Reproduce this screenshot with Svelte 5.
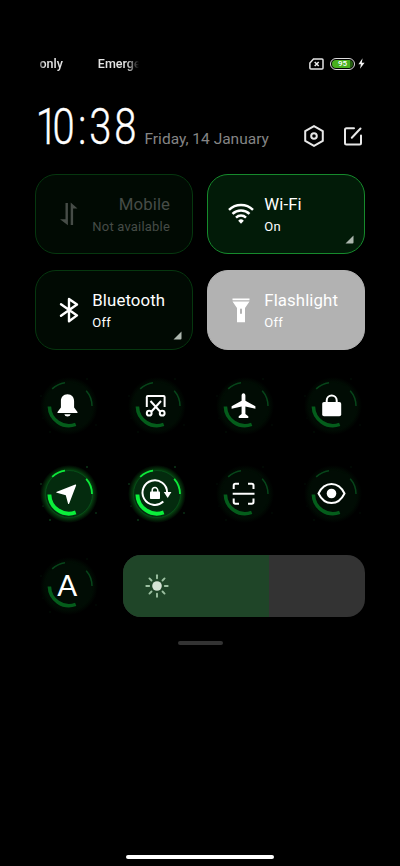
<script lang="ts">
  interface Tile {
    id: string
    title: string
    status: string
    more?: boolean
  }

  const tiles: Tile[] = [
    { id: 'mobile', title: 'Mobile', status: 'Not available' },
    { id: 'wifi', title: 'Wi-Fi', status: 'On', more: true },
    { id: 'bluetooth', title: 'Bluetooth', status: 'Off', more: true },
    { id: 'flashlight', title: 'Flashlight', status: 'Off' },
  ]

  const toggles = [
    { id: 'mute', label: 'Mute', on: false },
    { id: 'screenshot', label: 'Screenshot', on: false },
    { id: 'airplane', label: 'Airplane mode', on: false },
    { id: 'lock', label: 'Lock screen', on: false },
    { id: 'location', label: 'Location', on: true },
    { id: 'rotation', label: 'Rotation lock', on: true },
    { id: 'scanner', label: 'Scanner', on: false },
    { id: 'reading', label: 'Reading mode', on: false },
  ]

  const rays = [0, 45, 90, 135, 180, 225, 270, 315]

  let brightness = $state(60.2)
</script>

{#snippet orb(on: boolean)}
  <circle class="halo" cx="30" cy="30" r="29" fill={on ? 'url(#halo-on)' : 'url(#halo-off)'} />
  <circle class="disc" cx="30" cy="30" r="23.5" />
  <path class="arc thick" d="M10.4 30.5A19.6 19.6 0 0 0 36.7 48.4" />
  <path class="arc" d="M13.2 12.9A24 24 0 0 1 26 6.7" />
  <path class="arc" d="M47.2 14.8A23 23 0 0 1 53 30" />
  <g class="sparks">
    <circle cx="48" cy="3" r=".8" />
    <circle cx="2" cy="20" r=".7" />
    <circle cx="57" cy="49" r=".7" />
    <circle cx="11" cy="56" r=".8" />
    <circle cx="4" cy="42" r=".5" />
  </g>
{/snippet}

<svg class="defs" width="0" height="0" aria-hidden="true">
  <defs>
    <radialGradient id="halo-on">
      <stop offset="0.65" stop-color="#07541b" />
      <stop offset="0.82" stop-color="#06400f" />
      <stop offset="1" stop-color="#000" />
    </radialGradient>
    <radialGradient id="halo-off">
      <stop offset="0.5" stop-color="#011205" />
      <stop offset="0.8" stop-color="#010e04" />
      <stop offset="1" stop-color="#000" />
    </radialGradient>
  </defs>
</svg>

<main class="shade">
  <div class="status-bar">
    <div class="carrier"><span>only</span><span>Emerge</span></div>
    <div class="indicators">
      <svg width="15" height="12" viewBox="0 0 15 12">
        <path d="M4.5.9H13a1 1 0 0 1 1 1v8.2a1 1 0 0 1-1 1H1.9a1 1 0 0 1-1-1V5z" fill="none" stroke="#e4e4e4" stroke-width="1.5" />
        <path d="M5.7 4l4 4m0-4l-4 4" stroke="#eee" stroke-width="1.5" />
      </svg>
      <span class="battery"><span class="charge">95</span></span>
      <svg class="bolt" width="7" height="11" viewBox="0 0 7 11">
        <path d="M4.6.3L.4 6.2h2.5L2 10.7l4.6-6H3.8z" fill="#f2f2f2" />
      </svg>
    </div>
  </div>

  <header>
    <svg class="clock" width="104" height="46" viewBox="0 0 104 46">
      <text transform="scale(.79 1)" y="39.3" x="-1.5 19.5 51.8 66.2 97.8">10:38</text>
    </svg>
    <span class="date">Friday, 14 January</span>
    <div class="actions">
      <svg width="22" height="24" viewBox="0 0 22 24">
        <path d="M11 2.1l8.8 5v9.8l-8.8 5-8.8-5V7.1z" />
        <circle cx="11" cy="12" r="2.8" />
      </svg>
      <svg width="20" height="24" viewBox="0 0 20 24">
        <path d="M11 4.3H3.5A1.5 1.5 0 0 0 2 5.8V19a1.5 1.5 0 0 0 1.5 1.5h13A1.5 1.5 0 0 0 18 19v-7.500M8.800 13.800L17.500 4.500" />
      </svg>
    </div>
  </header>

  <section class="tiles">
    {#each tiles as tile (tile.id)}
      <article class="tile {tile.id}">
        <svg class="tile-icon" width="28" height="28" viewBox="0 0 28 28">
          {#if tile.id === 'mobile'}
            <path d="M10.500 3h2.400v22.200L5 19.200h5.500zM15.700 25V2.500l6.800 6h-4.400V25z" />
          {:else if tile.id === 'wifi'}
            <g fill="none" stroke="#fff" stroke-width="2.500">
              <path d="M2 9.800a17.300 17.300 0 0 1 24 0M5.500 13.800a12.300 12.300 0 0 1 17 0M9 17.600a7.300 7.300 0 0 1 10 0" />
            </g>
            <path d="M11.200 20.700a4 4 0 0 1 5.600 0L14 23.700z" />
          {:else if tile.id === 'bluetooth'}
            <path d="M6 8.200l16 11.200L14 25.200V2.900l8 5.600L6 19.700" fill="none" stroke="#fff" stroke-width="2.400" stroke-linejoin="round" stroke-linecap="round" />
          {:else}
            <path d="M5.500 2.500h17v1.700h-17zM5.500 5.500h17l-4.500 6.500v14.200h-8V12zM13 13.500V17a1 1 0 0 0 2 0v-3.500a1 1 0 0 0-2 0z" fill-rule="evenodd" />
          {/if}
        </svg>
        <div class="tile-text">
          <h2>{tile.title}</h2>
          <p>{tile.status}</p>
        </div>
        {#if tile.more}
          <svg class="more" width="9" height="9" viewBox="0 0 9 9"><path d="M8.500.5v7a1 1 0 0 1-1 1h-7z" /></svg>
        {/if}
      </article>
    {/each}
  </section>

  <section class="toggles">
    {#each toggles as toggle (toggle.id)}
      <button class="toggle" class:on={toggle.on} aria-label={toggle.label}>
        <svg width="60" height="60" viewBox="0 0 60 60">
          {@render orb(toggle.on)}
          <g class="glyph">
            {#if toggle.id === 'mute'}
              <path d="M28.500 18.300c-4.200 0-6.600 3-6.600 7v6.200l-3.200 4.200c-.6.800-.2 1.300.5 1.300h18.600c.7 0 1.100-.5.500-1.300l-3.200-4.200v-6.200c0-4-2.400-7-6.600-7zM25.300 38.300h6.400a3.300 2.900 0 0 1-6.400 0z" />
            {:else if toggle.id === 'screenshot'}
              <g class="line">
                <path d="M19.800 31V21a1 1 0 0 1 1-1h15.800a1 1 0 0 1 1 1v10M23.500 25l9.500 10.500M34 25l-9.500 10.500" />
                <circle cx="22.200" cy="37.200" r="2.400" />
                <circle cx="35.200" cy="37.200" r="2.400" />
              </g>
            {:else if toggle.id === 'airplane'}
              <path d="M28.500 17.300c-1.200 0-1.900 1-1.900 2.300v5.100l-10 5.500v2.600l10-2.200v7.400l-2.900 2.200v1.900h9.600v-1.900l-2.900-2.200v-7.400l10 2.200v-2.600l-10-5.500v-5.100c0-1.300-.7-2.300-1.900-2.300z" />
            {:else if toggle.id === 'lock'}
              <rect x="19.200" y="26" width="19" height="14.200" rx="1.800" />
              <path class="line" d="M23.700 27v-2.500a5 5 0 0 1 10 0V27" />
            {:else if toggle.id === 'location'}
              <path d="M36.300 20.600c.6-.2 1 .2.800.8L30.200 39.500c-.3.800-1 .8-1.200 0l-2.200-8.200-8.900-2.500c-.8-.2-.8-.8 0-1.100z" />
            {:else if toggle.id === 'rotation'}
              <path class="line" d="M36.300 37.500A12.300 12.300 0 1 1 40.100 28.500" />
              <path d="M36.800 28h7.600L40.700 34z" />
              <rect x="23" y="27.500" width="10" height="7.500" rx=".8" />
              <path d="M25.200 28v-1.600a2.800 2.800 0 0 1 5.600 0V28" fill="none" stroke="#fff" stroke-width="1.500" />
            {:else if toggle.id === 'scanner'}
              <path class="line" d="M18.700 25v-3.500a1.700 1.700 0 0 1 1.700-1.700H24M33 19.800h3.800a1.700 1.700 0 0 1 1.700 1.700V25M38.500 34.500v3.500a1.700 1.700 0 0 1-1.700 1.700H33M24 39.700h-3.600a1.700 1.700 0 0 1-1.700-1.700v-3.500M17.700 29.700h21.800" />
            {:else}
              <path class="line" d="M15.500 29.500C18.500 23.300 23 20 28.500 20s10 3.300 13 9.500C38.500 35.700 34 39 28.500 39s-10-3.300-13-9.500z" />
              <circle cx="28.500" cy="29.500" r="4.800" />
            {/if}
          </g>
        </svg>
      </button>
    {/each}
  </section>

  <section class="brightness">
    <button class="toggle" aria-label="Auto brightness">
      <svg width="60" height="60" viewBox="0 0 60 60">
        {@render orb(false)}
        <text class="auto" x="28.2" y="40" text-anchor="middle">A</text>
      </svg>
    </button>
    <div class="slider">
      <div class="level" style="width: {brightness}%">
        <svg width="24" height="24" viewBox="0 0 24 24">
          <circle cx="12" cy="12" r="4.800" fill="#d5e3d5" />
          {#each rays as angle}
            <path d="M12 1.300v2.900" transform="rotate({angle} 12 12)" stroke="#9cc0a1" stroke-width="1.900" stroke-linecap="round" />
          {/each}
        </svg>
      </div>
    </div>
  </section>

  <div class="handle"></div>
  <div class="home-bar"></div>
</main>

<style>
  :global(body) {
    margin: 0;
    background: #000;
  }

  .defs {
    display: block;
  }

  .shade {
    box-sizing: border-box;
    width: 400px;
    height: 866px;
    padding: 55px 35px 7px;
    display: flex;
    flex-direction: column;
    background: #000;
    color: #fff;
    font-family: Roboto, sans-serif;
    overflow: hidden;
  }

  .status-bar {
    height: 17px;
    display: flex;
    justify-content: space-between;
    align-items: center;
  }

  .carrier {
    display: flex;
    gap: 35px;
    margin-left: 4.500px;
    white-space: nowrap;
    font-size: 12.500px;
    font-weight: 500;
    color: #e4e4e4;
    mask-image: linear-gradient(to right, #0008, #000 5%, #000 86%, transparent 98%);
  }

  .indicators {
    display: flex;
    align-items: center;
  }

  .battery {
    box-sizing: border-box;
    width: 25px;
    height: 12px;
    margin: 0 3px 0 6px;
    padding: 1px;
    border: 1px solid #ddd;
    border-radius: 6px;
  }

  .charge {
    display: block;
    height: 8px;
    border-radius: 4px;
    background: linear-gradient(to right, #48b01e 88%, #245c10 88%);
    font-size: 8px;
    font-weight: 500;
    line-height: 8.500px;
    text-align: center;
  }

  header {
    height: 46px;
    margin-top: 33px;
    display: flex;
    align-items: flex-start;
  }

  .clock {
    margin-left: 2px;
    overflow: visible;
    font-size: 50.500px;
    font-weight: 300;
    fill: #fff;
    stroke: #fff;
    stroke-width: .4;
  }

  .date {
    margin: 25px 0 0 3.500px;
    font-size: 15.500px;
    line-height: 18px;
    white-space: nowrap;
    color: #858585;
  }

  .actions {
    display: flex;
    gap: 18px;
    margin: 19px 2px 0 auto;
    fill: none;
    stroke: #e8e8e8;
    stroke-width: 2;
    stroke-linejoin: round;
    stroke-linecap: round;
  }

  .tiles {
    display: grid;
    grid-template-columns: 158px 158px;
    grid-auto-rows: 80px;
    gap: 16px 14px;
    margin-top: 22.500px;
  }

  .tile {
    position: relative;
    box-sizing: border-box;
    display: flex;
    align-items: center;
    padding-left: 19px;
    border: 1px solid #06370f;
    border-radius: 21px;
    background: #010a03;
  }

  .tile-icon {
    fill: #fff;
  }

  .tile-text {
    margin: 2px 0 0 9.300px;
  }

  .tile h2 {
    margin: 0;
    font-size: 16.800px;
    font-weight: 400;
    line-height: 22px;
    letter-spacing: .1px;
  }

  .tile p {
    margin: 2px 0 0;
    font-size: 13px;
    line-height: 20px;
    letter-spacing: .2px;
  }

  .mobile {
    color: #464c47;
  }

  .mobile .tile-icon {
    fill: #464c47;
  }

  .mobile .tile-text {
    text-align: right;
  }

  .wifi {
    border-color: #168a2c;
    background: #021b08;
  }

  .flashlight {
    border-color: #b2b2b2;
    background: #b2b2b2;
  }

  .more {
    position: absolute;
    right: 10px;
    bottom: 9px;
    fill: #adb8af;
  }

  .toggles {
    display: grid;
    grid-template-columns: repeat(4, 60px);
    grid-auto-rows: 60px;
    justify-content: space-between;
    row-gap: 28.300px;
    margin: 26.200px 1.500px 0 4px;
  }

  .toggle {
    width: 60px;
    height: 60px;
    padding: 0;
    border: 0;
    background: none;
  }

  .toggle svg {
    display: block;
  }

  .disc {
    fill: #010c04;
  }

  .arc {
    fill: none;
    stroke: #07451a;
    stroke-width: 1.500;
  }

  .arc.thick {
    stroke: #045d1b;
    stroke-width: 3.600;
  }

  .sparks {
    fill: #041509;
  }

  .on .disc {
    fill: #042b0e;
    stroke: #08501b;
    stroke-width: .8;
  }

  .on .arc {
    stroke: #0ee83a;
    stroke-width: 1.800;
  }

  .on .arc.thick {
    stroke: #0bef3b;
    stroke-width: 3.900;
  }

  .on .sparks {
    fill: #15602a;
  }

  .glyph {
    fill: #fff;
  }

  .line {
    fill: none;
    stroke: #fff;
    stroke-width: 2;
  }

  .auto {
    font-family: Lato, sans-serif;
    font-size: 29.500px;
    fill: #fff;
  }

  .brightness {
    display: flex;
    align-items: center;
    justify-content: space-between;
    height: 62px;
    margin-top: 31px;
    padding-left: 4px;
  }

  .slider {
    width: 242px;
    height: 62px;
    border-radius: 18px;
    background: #333;
    overflow: hidden;
  }

  .level {
    box-sizing: border-box;
    height: 100%;
    padding: 19px 22px;
    background: #1f4528;
  }

  .handle {
    width: 45px;
    height: 4px;
    margin: 24px auto 0;
    border-radius: 2px;
    background: #333;
  }

  .home-bar {
    width: 148px;
    height: 4px;
    margin: auto auto 0;
    border-radius: 2px;
    background: #fff;
  }
</style>
